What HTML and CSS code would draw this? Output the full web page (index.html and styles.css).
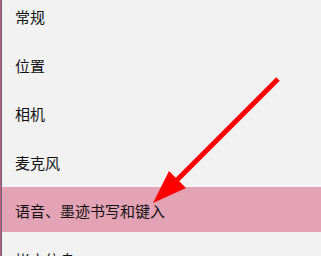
FILE: index.html
```html
<!DOCTYPE html>
<html lang="zh-CN">
<head>
    <meta charset="UTF-8">
    <title>隐私</title>
    <link rel="stylesheet" href="styles.css">
</head>
<body>
    <div class="panel">
        <ul class="menu">
            <li class="menu-item">常规</li>
            <li class="menu-item">位置</li>
            <li class="menu-item">相机</li>
            <li class="menu-item">麦克风</li>
            <li class="menu-item active">语音、墨迹书写和键入</li>
            <li class="menu-item">帐户信息</li>
        </ul>
        <svg class="arrow" width="321" height="256" viewBox="0 0 321 256">
            <line x1="278" y1="79" x2="176" y2="181" stroke="#ff0000" stroke-width="5"/>
            <polygon points="153,203 169,171 186,188" fill="#ff0000"/>
        </svg>
    </div>
</body>
</html>
```

FILE: styles.css
```css
body {
    margin: 0;
    padding: 0;
    background: #f2f2f2;
    font-family: "Microsoft YaHei", "Noto Sans CJK SC", sans-serif;
}

.panel {
    position: relative;
    width: 321px;
    height: 256px;
    overflow: hidden;
    border-left: 1px solid #c9557d;
    box-sizing: border-box;
}

.panel::before {
    content: "";
    position: absolute;
    left: 0;
    top: 0;
    bottom: 0;
    width: 1px;
    background: #5f6b78;
}

.menu {
    list-style: none;
    margin: -7px 0 0 0;
    padding: 0;
}

.menu-item {
    display: flex;
    align-items: center;
    height: 45px;
    margin-bottom: 3.5px;
    padding: 2px 0 0 14px;
    box-sizing: border-box;
    font-size: 15px;
    color: #111;
}

.menu-item.active {
    background: #e4a2b5;
}

.arrow {
    position: absolute;
    left: -1px;
    top: 0;
}
```
